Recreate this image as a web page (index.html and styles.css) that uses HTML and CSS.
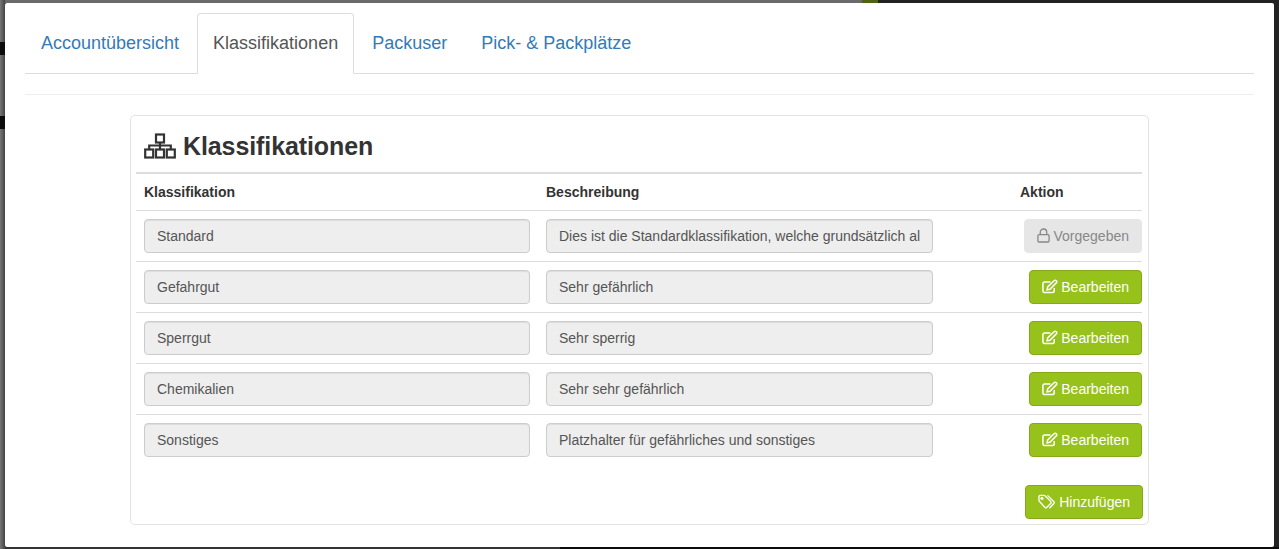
FILE: index.html
```html
<!DOCTYPE html>
<html lang="de">

<head>
    <meta charset="UTF-8">
    <meta name="viewport" content="width=device-width, initial-scale=1.0">
    <title>Klassifikationen</title>
    <link rel="stylesheet" href="styles.css">
</head>

<body>
    <div class="modal">
        <ul class="tabs">
            <li><a href="#">Accountübersicht</a></li>
            <li class="active"><a href="#">Klassifikationen</a></li>
            <li><a href="#">Packuser</a></li>
            <li><a href="#">Pick- &amp; Packplätze</a></li>
        </ul>
        <hr class="divider">
        <div class="panel">
            <h2 class="title">
                <svg class="title-icon" viewBox="0 0 32 26" width="32" height="26" fill="none" stroke="currentColor" stroke-width="2.2">
                    <rect x="12" y="1.5" width="8" height="8"></rect>
                    <rect x="1.2" y="16.5" width="8" height="8"></rect>
                    <rect x="12" y="16.5" width="8" height="8"></rect>
                    <rect x="22.8" y="16.5" width="8" height="8"></rect>
                    <path d="M16 9.5v7M5.2 16.5v-4h21.6v4"></path>
                </svg>
                Klassifikationen
            </h2>
            <table class="list">
                <thead>
                    <tr>
                        <th class="col-name">Klassifikation</th>
                        <th class="col-desc">Beschreibung</th>
                        <th class="col-action">Aktion</th>
                    </tr>
                </thead>
                <tbody>
                    <tr>
                        <td><input class="field" type="text" value="Standard" disabled></td>
                        <td><input class="field field-desc" type="text" value="Dies ist die Standardklassifikation, welche grundsätzlich allen Artikeln zugewiesen wird" disabled></td>
                        <td class="action">
                            <button class="btn btn-locked" type="button">
                                <svg class="icon" viewBox="0 0 14 16" width="13" height="15" fill="none" stroke="currentColor" stroke-width="1.4">
                                    <path d="M3.5 7V4.5a3.5 3.5 0 0 1 7 0V7"></path>
                                    <rect x="1" y="7" width="12" height="8" rx="1.2"></rect>
                                </svg>
                                Vorgegeben
                            </button>
                        </td>
                    </tr>
                    <tr>
                        <td><input class="field" type="text" value="Gefahrgut" disabled></td>
                        <td><input class="field field-desc" type="text" value="Sehr gefährlich" disabled></td>
                        <td class="action">
                            <button class="btn btn-green" type="button">
                                <svg class="icon" viewBox="0 0 17 15" width="16" height="15" fill="none" stroke="currentColor" stroke-width="1.6">
                                    <path d="M13 9v3.2a1.6 1.6 0 0 1-1.6 1.6H2.6A1.6 1.6 0 0 1 1 12.2V4.4a1.6 1.6 0 0 1 1.6-1.6H9"></path>
                                    <path d="M6 8l-.6 3 3-.6 7-7a1.2 1.2 0 0 0 0-1.7l-.6-.6a1.2 1.2 0 0 0-1.7 0z"></path>
                                </svg>
                                Bearbeiten
                            </button>
                        </td>
                    </tr>
                    <tr>
                        <td><input class="field" type="text" value="Sperrgut" disabled></td>
                        <td><input class="field field-desc" type="text" value="Sehr sperrig" disabled></td>
                        <td class="action">
                            <button class="btn btn-green" type="button">
                                <svg class="icon" viewBox="0 0 17 15" width="16" height="15" fill="none" stroke="currentColor" stroke-width="1.6">
                                    <path d="M13 9v3.2a1.6 1.6 0 0 1-1.6 1.6H2.6A1.6 1.6 0 0 1 1 12.2V4.4a1.6 1.6 0 0 1 1.6-1.6H9"></path>
                                    <path d="M6 8l-.6 3 3-.6 7-7a1.2 1.2 0 0 0 0-1.7l-.6-.6a1.2 1.2 0 0 0-1.7 0z"></path>
                                </svg>
                                Bearbeiten
                            </button>
                        </td>
                    </tr>
                    <tr>
                        <td><input class="field" type="text" value="Chemikalien" disabled></td>
                        <td><input class="field field-desc" type="text" value="Sehr sehr gefährlich" disabled></td>
                        <td class="action">
                            <button class="btn btn-green" type="button">
                                <svg class="icon" viewBox="0 0 17 15" width="16" height="15" fill="none" stroke="currentColor" stroke-width="1.6">
                                    <path d="M13 9v3.2a1.6 1.6 0 0 1-1.6 1.6H2.6A1.6 1.6 0 0 1 1 12.2V4.4a1.6 1.6 0 0 1 1.6-1.6H9"></path>
                                    <path d="M6 8l-.6 3 3-.6 7-7a1.2 1.2 0 0 0 0-1.7l-.6-.6a1.2 1.2 0 0 0-1.7 0z"></path>
                                </svg>
                                Bearbeiten
                            </button>
                        </td>
                    </tr>
                    <tr>
                        <td><input class="field" type="text" value="Sonstiges" disabled></td>
                        <td><input class="field field-desc" type="text" value="Platzhalter für gefährliches und sonstiges" disabled></td>
                        <td class="action">
                            <button class="btn btn-green" type="button">
                                <svg class="icon" viewBox="0 0 17 15" width="16" height="15" fill="none" stroke="currentColor" stroke-width="1.6">
                                    <path d="M13 9v3.2a1.6 1.6 0 0 1-1.6 1.6H2.6A1.6 1.6 0 0 1 1 12.2V4.4a1.6 1.6 0 0 1 1.6-1.6H9"></path>
                                    <path d="M6 8l-.6 3 3-.6 7-7a1.2 1.2 0 0 0 0-1.7l-.6-.6a1.2 1.2 0 0 0-1.7 0z"></path>
                                </svg>
                                Bearbeiten
                            </button>
                        </td>
                    </tr>
                </tbody>
            </table>
            <div class="panel-foot">
                <button class="btn btn-green" type="button">
                    <svg class="icon" viewBox="0 0 19 16" width="18" height="16" fill="none" stroke="currentColor" stroke-width="1.4">
                        <path d="M1 2.2A1.2 1.2 0 0 1 2.2 1h4.2c.4 0 .7.1 1 .4l6.2 6.2a1.2 1.2 0 0 1 0 1.7l-4.5 4.5a1.2 1.2 0 0 1-1.7 0L1.4 7.2a1.4 1.4 0 0 1-.4-1z"></path>
                        <path d="M10 1l6.8 6.8a1.2 1.2 0 0 1 0 1.7L12 14.6"></path>
                        <circle cx="4.2" cy="4.2" r="1"></circle>
                    </svg>
                    Hinzufügen
                </button>
            </div>
        </div>
    </div>
</body>

</html>
```

FILE: styles.css
```css
* {
    box-sizing: border-box;
}

html,
body {
    height: 100%;
}

body {
    margin: 0;
    padding: 3px 5px 2px;
    overflow: hidden;
    font-family: "Liberation Sans", Arial, sans-serif;
    font-size: 14px;
    color: #333;
    background:
        linear-gradient(#0c0c0c, #0c0c0c) 0 42px / 5px 13px no-repeat,
        linear-gradient(#0c0c0c, #0c0c0c) 0 116px / 5px 13px no-repeat,
        linear-gradient(to right, #777, #444) 0 0 / 5px 100% no-repeat,
        linear-gradient(#6a6a6a, #6a6a6a) 0 0 / 862px 3px no-repeat,
        linear-gradient(#4f6410, #4f6410) 862px 0 / 16px 3px no-repeat,
        linear-gradient(#333, #333) 5px 547px / 555px 2px no-repeat,
        linear-gradient(#0c0c0c, #0c0c0c) 560px 547px / 719px 2px no-repeat,
        #222;
}

.modal {
    height: 544px;
    padding: 10px 20px 0;
    background-color: #fff;
    border-radius: 2px;
}

.tabs {
    display: flex;
    margin: 0;
    padding: 0;
    list-style: none;
    border-bottom: 1px solid #ddd;
}

.tabs li {
    margin-right: 2px;
    margin-bottom: -1px;
}

.tabs a {
    display: block;
    padding: 16px 15px 17px;
    font-size: 18px;
    line-height: 26px;
    color: #337ab7;
    text-decoration: none;
    border: 1px solid transparent;
    border-radius: 4px 4px 0 0;
}

.tabs .active a {
    color: #555;
    background-color: #fff;
    border-color: #ddd #ddd #fff;
}

.divider {
    height: 1px;
    margin: 20px 0;
    border: 0;
    background-color: #eee;
}

.panel {
    height: 410px;
    margin: 0 105px;
    padding: 0 5px;
    border: 1px solid #e3e3e3;
    border-radius: 5px;
}

.title {
    display: flex;
    align-items: center;
    gap: 7px;
    height: 56px;
    margin: 0;
    padding: 4px 8px 0;
    font-size: 25px;
    letter-spacing: -0.1px;
    font-weight: bold;
    color: #333;
}

.title-icon {
    flex: none;
}

.list {
    width: 1006px;
    border-collapse: collapse;
    table-layout: fixed;
}

.list th {
    height: 37px;
    padding: 0 8px;
    text-align: left;
    font-size: 14px;
    border-top: 2px solid #ddd;
    border-bottom: 1px solid #ddd;
}

.col-name {
    width: 402px;
}

.col-desc {
    width: 474px;
}

.col-action {
    width: 130px;
}

.list td {
    height: 51px;
    padding: 0 8px;
    border-bottom: 1px solid #ddd;
}

.list tr:last-child td {
    border-bottom: 0;
}

.list td.action {
    padding-right: 0;
    text-align: right;
}

.field {
    display: block;
    width: 386px;
    height: 34px;
    padding: 6px 12px;
    font-family: inherit;
    font-size: 14px;
    color: #555;
    background-color: #eee;
    border: 1px solid #ccc;
    border-radius: 4px;
    box-shadow: inset 0 1px 1px rgba(0, 0, 0, 0.075);
    opacity: 1;
}

.field-desc {
    width: 387px;
}

.btn {
    display: inline-flex;
    align-items: center;
    justify-content: center;
    gap: 3px;
    height: 34px;
    padding: 0 12px;
    font-family: inherit;
    font-size: 14px;
    border: 1px solid transparent;
    border-radius: 4px;
    cursor: pointer;
}

.btn-green {
    color: #fff;
    background-color: #97c21c;
    border-color: #85a91a;
}

.btn-locked {
    color: #888;
    background-color: #e6e6e6;
    border-color: #e6e6e6;
    cursor: not-allowed;
}

.icon {
    flex: none;
}

.panel-foot {
    display: flex;
    justify-content: flex-end;
    margin-top: 20px;
}
```
